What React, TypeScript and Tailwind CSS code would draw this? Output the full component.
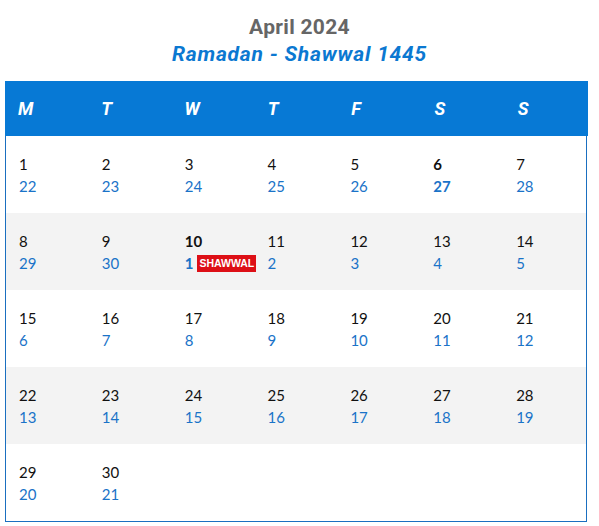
import React from "react";

type Cell = { g: number; h: number; bold?: boolean; badge?: string } | null;

const rows: Cell[][] = [
  [
    { g: 1, h: 22 }, { g: 2, h: 23 }, { g: 3, h: 24 }, { g: 4, h: 25 }, { g: 5, h: 26 }, { g: 6, h: 27, bold: true }, { g: 7, h: 28 },
  ],
  [
    { g: 8, h: 29 }, { g: 9, h: 30 }, { g: 10, h: 1, bold: true, badge: "SHAWWAL" }, { g: 11, h: 2 }, { g: 12, h: 3 }, { g: 13, h: 4 }, { g: 14, h: 5 },
  ],
  [
    { g: 15, h: 6 }, { g: 16, h: 7 }, { g: 17, h: 8 }, { g: 18, h: 9 }, { g: 19, h: 10 }, { g: 20, h: 11 }, { g: 21, h: 12 },
  ],
  [
    { g: 22, h: 13 }, { g: 23, h: 14 }, { g: 24, h: 15 }, { g: 25, h: 16 }, { g: 26, h: 17 }, { g: 27, h: 18 }, { g: 28, h: 19 },
  ],
  [{ g: 29, h: 20 }, { g: 30, h: 21 }, null, null, null, null, null],
];

const days = ["M", "T", "W", "T", "F", "S", "S"];

export default function App() {
  return (
    <div className="w-[599px] h-[526px] bg-white overflow-hidden" style={{ fontFamily: "Lato, 'Liberation Sans', sans-serif" }}>
      <div className="pt-[13px] h-[81px] text-center" style={{ fontFamily: "Roboto, 'Liberation Sans', sans-serif" }}>
        <div className="text-[21px] leading-[28px] font-bold text-[#666666] tracking-[0.3px]">April 2024</div>
        <div className="text-[21px] leading-[26px] font-bold italic text-[#0b78d1] tracking-[0.8px]">Ramadan - Shawwal 1445</div>
      </div>
      <div className="ml-[5px] w-[583px]">
        <div className="grid grid-cols-7 h-[55px] bg-[#0779d5] items-center">
          {days.map((d, i) => (
            <div key={i} className="pl-[13px] text-white text-[18px] font-bold italic" style={{ fontFamily: "Roboto, 'Liberation Sans', sans-serif" }}>
              {d}
            </div>
          ))}
        </div>
        <div className="border-l border-r border-b border-[#1a6fc0] w-[582px]">
          {rows.map((r, ri) => (
            <div key={ri} className={`grid grid-cols-7 h-[77px] ${ri % 2 === 1 ? "bg-[#f3f3f3]" : "bg-white"}`}>
              {r.map((c, ci) => (
                <div key={ci} className="pl-[13px] pt-[17px]">
                  {c && (
                    <>
                      <div className={`text-[15px] leading-[22px] text-[#111111] ${c.bold ? "font-bold" : ""}`}>{c.g}</div>
                      <div className="flex items-center h-[22px]">
                        <span className={`text-[15px] leading-[22px] text-[#1a73c8] ${c.bold ? "font-bold" : ""}`}>{c.h}</span>
                        {c.badge && (
                          <span className="ml-[4px] bg-[#dd0f16] text-white text-[10.5px] font-bold leading-[17px] h-[17px] px-[2px]" style={{ fontFamily: "'Liberation Sans', Arial, sans-serif" }}>
                            {c.badge}
                          </span>
                        )}
                      </div>
                    </>
                  )}
                </div>
              ))}
            </div>
          ))}
        </div>
      </div>
    </div>
  );
}
